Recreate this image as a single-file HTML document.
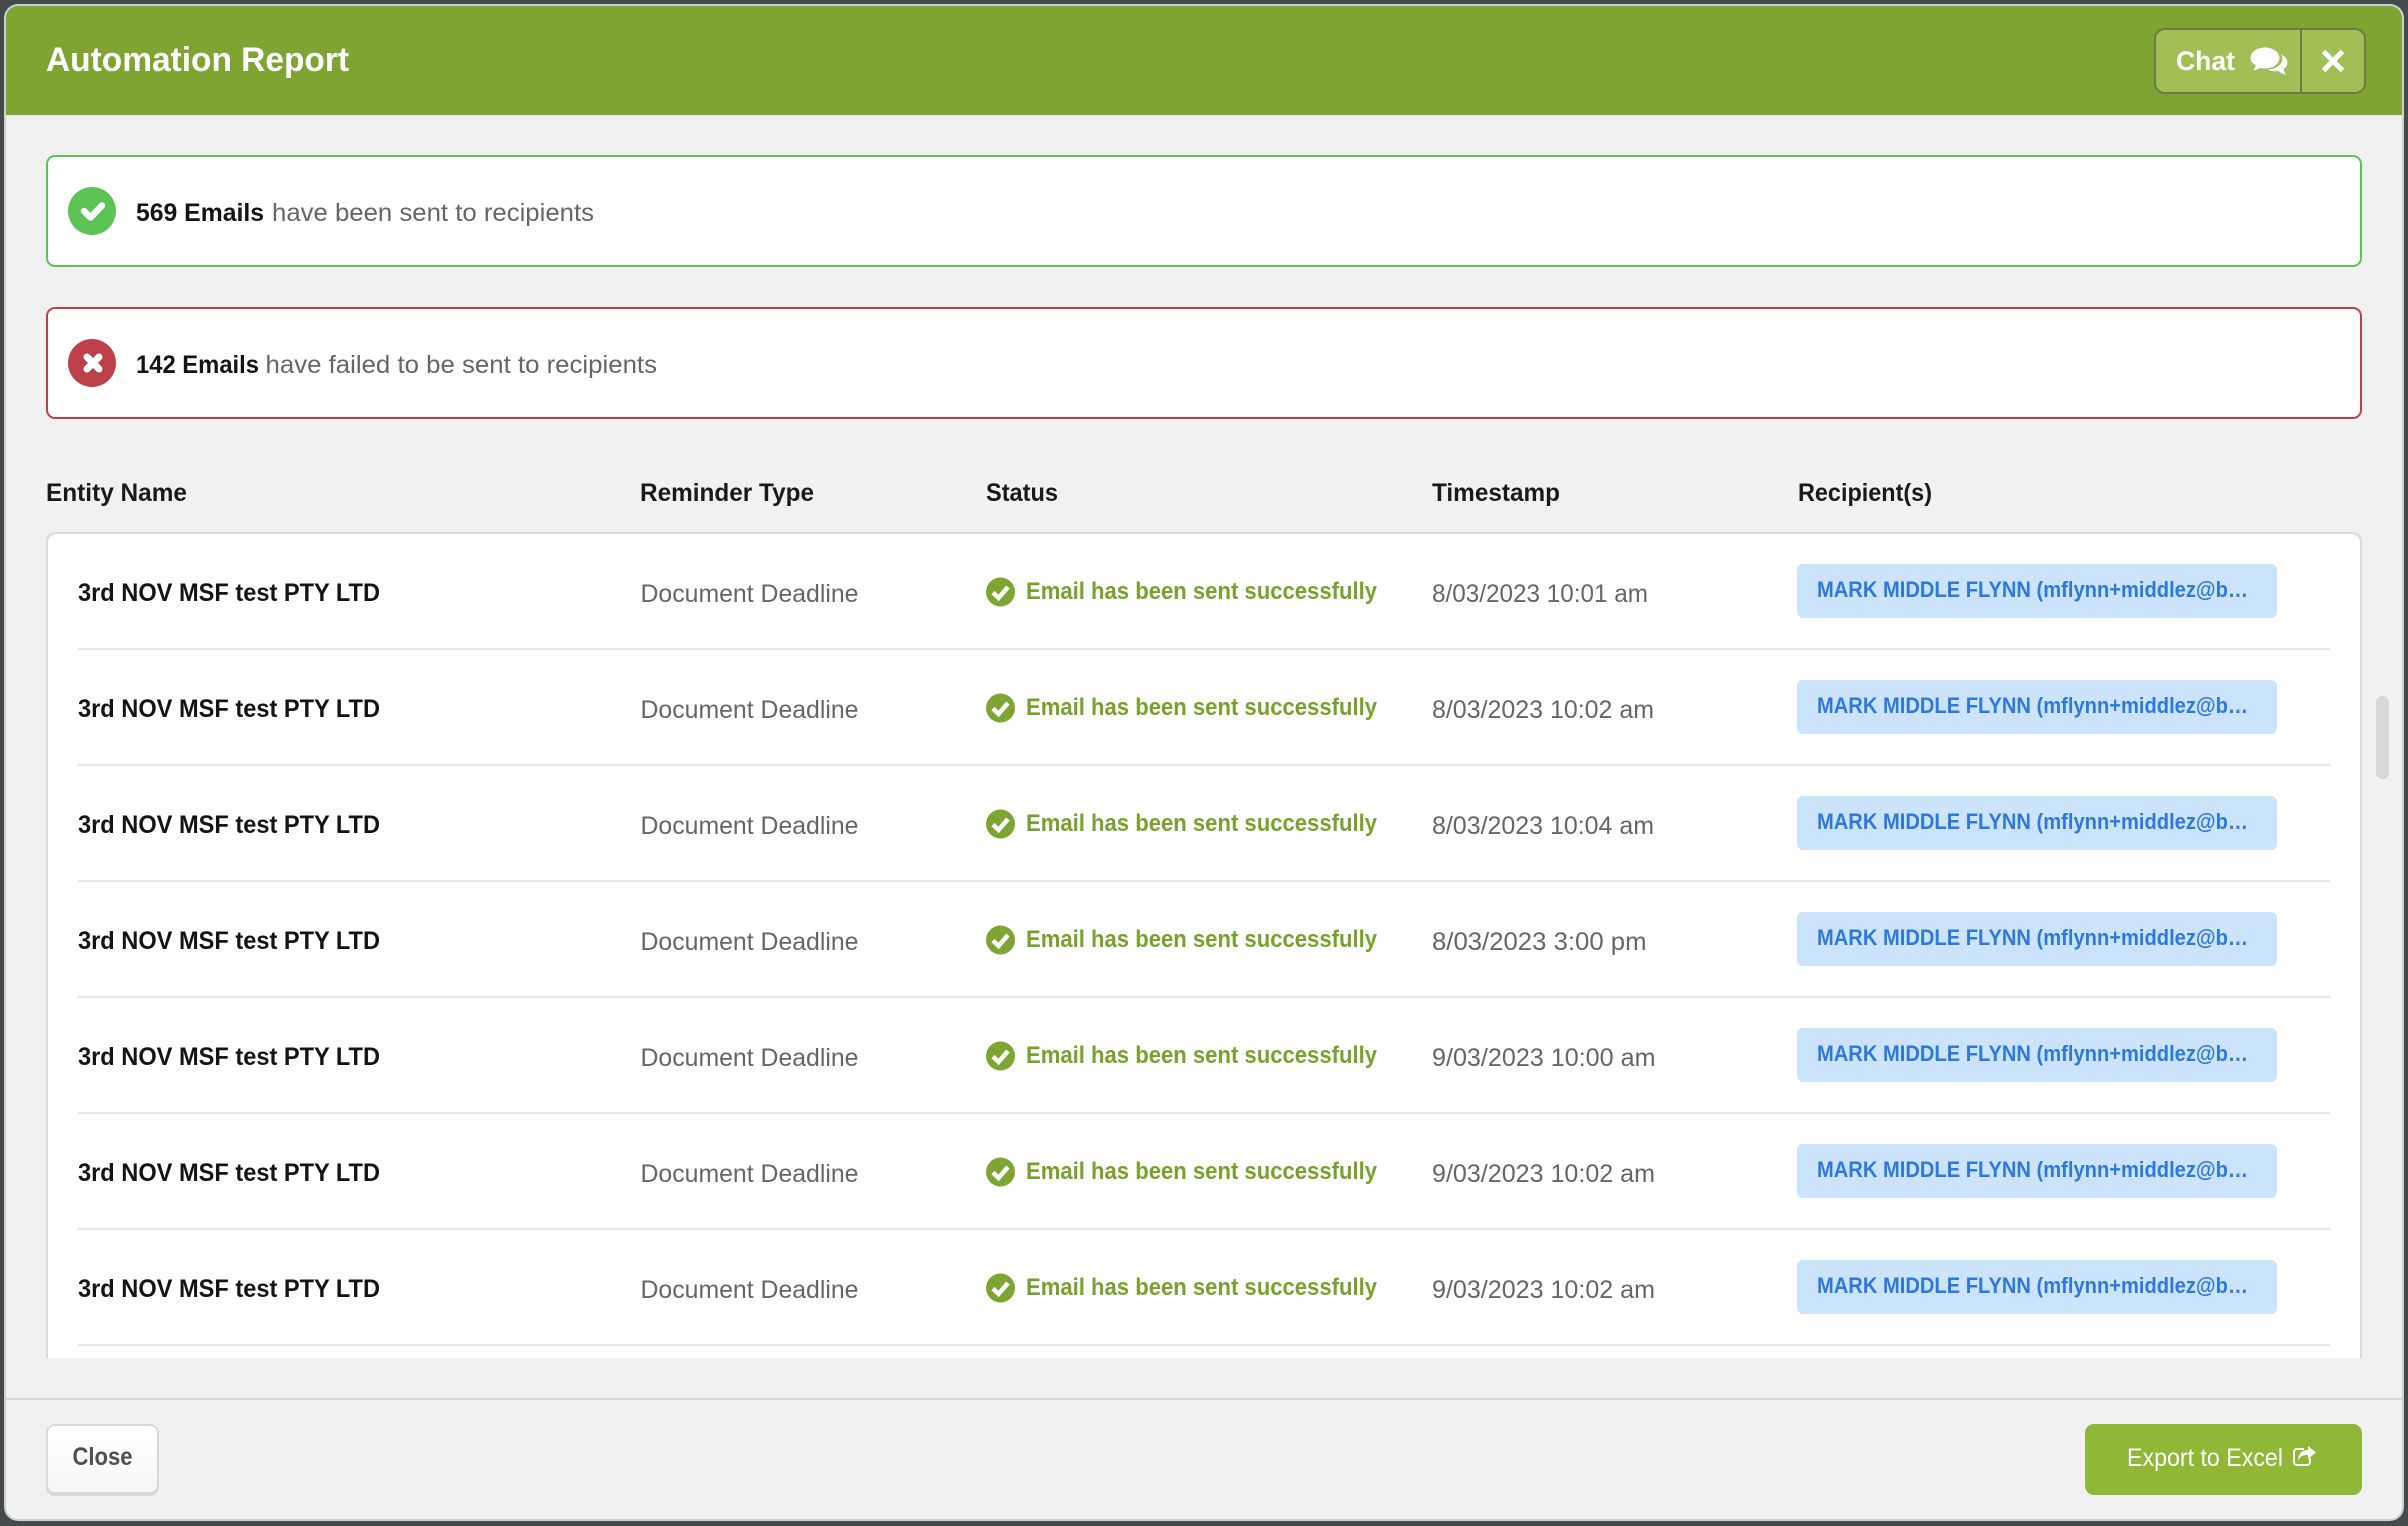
<!DOCTYPE html>
<html lang="en">
<head>
<meta charset="utf-8">
<title>Automation Report</title>
<style>
html,body{margin:0;padding:0;width:2408px;height:1526px;overflow:hidden;background:#454b4c}
svg{display:block;position:absolute;left:0;top:0}
text{font-family:"Liberation Sans",Arial,sans-serif}
.title{font-size:34px;font-weight:700;fill:#fff}
.dark{font-size:25px;font-weight:700;fill:#141414}
.grey{font-size:25px;fill:#666}
.head{font-size:25px;font-weight:700;fill:#1a1a1a}
.ok{font-size:24px;font-weight:700;fill:#78a22c}
.chip{font-size:22px;font-weight:700;fill:#2f78dc}
.cell{fill:#666;font-size:25px}
.nm{font-size:25px;font-weight:700;fill:#141414}
</style>
</head>
<body>
<svg width="2408" height="1526" viewBox="0 0 2408 1526" xmlns="http://www.w3.org/2000/svg">
<defs>
<linearGradient id="cg" x1="0" y1="0" x2="0" y2="1"><stop offset="0" stop-color="#fff"/><stop offset="1" stop-color="#f6f6f6"/></linearGradient>
</defs>
<!-- modal -->
<rect x="4" y="4" width="2400" height="1517" rx="14" fill="#cfcfcf"/>
<rect x="6" y="6" width="2396" height="1513" rx="12" fill="#f1f1f1"/>
<path d="M6 115V18a12 12 0 0 1 12-12H2390a12 12 0 0 1 12 12V115z" fill="#80a431"/>
<text class="title" x="46" y="71" textLength="303" lengthAdjust="spacingAndGlyphs">Automation Report</text>
<!-- header buttons -->
<rect x="2155" y="29" width="210" height="64" rx="10" fill="#a0c056" stroke="#6f7b43" stroke-width="2"/>
<rect x="2300" y="29" width="2" height="64" fill="#6f7b43"/>
<text x="2176" y="70" font-size="27" font-weight="700" fill="#fff" textLength="59" lengthAdjust="spacingAndGlyphs">Chat</text>
<path fill="#fff" d="M2265 47.500c8 0 14.500 4.700 14.500 10.500s-6.500 10.500-14.500 10.500c-2 0-3.500-.2-5-.6-2 1.600-4.500 2.300-7 2.400 1.500-1.500 2.500-3.300 2.800-5-3.500-1.900-5.300-4.500-5.300-7.300 0-5.800 6.500-10.500 14.500-10.500z"/>
<path fill="#fff" d="M2281 54.500c4 1.500 6.500 4.600 6.500 8 0 2.600-1.500 5-4 6.600.3 1.700 1.200 3.500 2.500 5.500-3-.5-5.500-1.800-7.500-3.600-1 .2-2.200.3-3.300.3-3 0-5.700-.7-8-2 9 .5 14.500-5 15-9 .2-2.500-.2-4.500-1.200-6.800z"/>
<path d="M2323.500 51.500l19 19M2342.500 51.500l-19 19" stroke="#fff" stroke-width="5" fill="none"/>
<!-- alerts -->
<rect x="47" y="156" width="2314" height="110" rx="8" fill="#fff" stroke="#5bc454" stroke-width="2"/>
<circle cx="92" cy="211" r="24" fill="#5bc454"/>
<path d="M84 211l6.500 6.500L102 205.500" stroke="#fff" stroke-width="6.500" fill="none" stroke-linecap="round" stroke-linejoin="round"/>
<text class="dark" x="136" y="221" textLength="128" lengthAdjust="spacingAndGlyphs">569 Emails</text>
<text class="grey" x="272" y="221" textLength="322" lengthAdjust="spacingAndGlyphs">have been sent to recipients</text>
<rect x="47" y="308" width="2314" height="110" rx="8" fill="#fff" stroke="#bd3f48" stroke-width="2"/>
<circle cx="92" cy="363" r="24" fill="#bd3f48"/>
<path d="M87 357l12 12M99 357l-12 12" stroke="#fff" stroke-width="7" fill="none" stroke-linecap="round"/>
<text class="dark" x="136" y="373" textLength="123" lengthAdjust="spacingAndGlyphs">142 Emails</text>
<text class="grey" x="265.500" y="373" textLength="391.500" lengthAdjust="spacingAndGlyphs">have failed to be sent to recipients</text>
<!-- table head -->
<text class="head" x="46" y="501" textLength="141" lengthAdjust="spacingAndGlyphs">Entity Name</text>
<text class="head" x="640" y="501" textLength="174" lengthAdjust="spacingAndGlyphs">Reminder Type</text>
<text class="head" x="986" y="501" textLength="72" lengthAdjust="spacingAndGlyphs">Status</text>
<text class="head" x="1432" y="501" textLength="128" lengthAdjust="spacingAndGlyphs">Timestamp</text>
<text class="head" x="1798" y="501" textLength="134" lengthAdjust="spacingAndGlyphs">Recipient(s)</text>
<!-- list panel -->
<rect x="46" y="532" width="2316" height="826" rx="9" fill="#dcdcdc"/>
<rect x="46" y="1346" width="2316" height="12" fill="#dcdcdc"/>
<path d="M48 1358V542a8 8 0 0 1 8-8H2352a8 8 0 0 1 8 8V1358z" fill="#fff"/>
<g fill="#e8e8e8">
<rect x="78" y="648" width="2252" height="2"/><rect x="78" y="764" width="2252" height="2"/><rect x="78" y="880" width="2252" height="2"/><rect x="78" y="996" width="2252" height="2"/><rect x="78" y="1112" width="2252" height="2"/><rect x="78" y="1228" width="2252" height="2"/><rect x="78" y="1344" width="2252" height="2"/>
</g>
<!-- row 1 -->
<text class="nm" x="78" y="601" textLength="302" lengthAdjust="spacingAndGlyphs">3rd NOV MSF test PTY LTD</text>
<text class="cell" x="640.500" y="602" textLength="218" lengthAdjust="spacingAndGlyphs">Document Deadline</text>
<circle cx="1000.500" cy="592" r="14.500" fill="#7ea532"/><path d="M993 592.500l5.500 5.500 9.500-11" stroke="#fff" stroke-width="4.500" fill="none"/>
<text class="ok" x="1026" y="599" textLength="351" lengthAdjust="spacingAndGlyphs">Email has been sent successfully</text>
<text class="cell" x="1432" y="602" textLength="216" lengthAdjust="spacingAndGlyphs">8/03/2023 10:01 am</text>
<rect x="1797" y="564" width="480" height="54" rx="6" fill="#cbe4fb"/>
<text class="chip" x="1817" y="597" textLength="431" lengthAdjust="spacingAndGlyphs">MARK MIDDLE FLYNN (mflynn+middlez@b…</text>
<!-- row 2 -->
<text class="nm" x="78" y="717" textLength="302" lengthAdjust="spacingAndGlyphs">3rd NOV MSF test PTY LTD</text>
<text class="cell" x="640.500" y="718" textLength="218" lengthAdjust="spacingAndGlyphs">Document Deadline</text>
<circle cx="1000.500" cy="708" r="14.500" fill="#7ea532"/><path d="M993 708.500l5.500 5.500 9.500-11" stroke="#fff" stroke-width="4.500" fill="none"/>
<text class="ok" x="1026" y="715" textLength="351" lengthAdjust="spacingAndGlyphs">Email has been sent successfully</text>
<text class="cell" x="1432" y="718" textLength="222" lengthAdjust="spacingAndGlyphs">8/03/2023 10:02 am</text>
<rect x="1797" y="680" width="480" height="54" rx="6" fill="#cbe4fb"/>
<text class="chip" x="1817" y="713" textLength="431" lengthAdjust="spacingAndGlyphs">MARK MIDDLE FLYNN (mflynn+middlez@b…</text>
<!-- row 3 -->
<text class="nm" x="78" y="833" textLength="302" lengthAdjust="spacingAndGlyphs">3rd NOV MSF test PTY LTD</text>
<text class="cell" x="640.500" y="834" textLength="218" lengthAdjust="spacingAndGlyphs">Document Deadline</text>
<circle cx="1000.500" cy="824" r="14.500" fill="#7ea532"/><path d="M993 824.500l5.500 5.500 9.500-11" stroke="#fff" stroke-width="4.500" fill="none"/>
<text class="ok" x="1026" y="831" textLength="351" lengthAdjust="spacingAndGlyphs">Email has been sent successfully</text>
<text class="cell" x="1432" y="834" textLength="222" lengthAdjust="spacingAndGlyphs">8/03/2023 10:04 am</text>
<rect x="1797" y="796" width="480" height="54" rx="6" fill="#cbe4fb"/>
<text class="chip" x="1817" y="829" textLength="431" lengthAdjust="spacingAndGlyphs">MARK MIDDLE FLYNN (mflynn+middlez@b…</text>
<!-- row 4 -->
<text class="nm" x="78" y="949" textLength="302" lengthAdjust="spacingAndGlyphs">3rd NOV MSF test PTY LTD</text>
<text class="cell" x="640.500" y="950" textLength="218" lengthAdjust="spacingAndGlyphs">Document Deadline</text>
<circle cx="1000.500" cy="940" r="14.500" fill="#7ea532"/><path d="M993 940.500l5.500 5.500 9.500-11" stroke="#fff" stroke-width="4.500" fill="none"/>
<text class="ok" x="1026" y="947" textLength="351" lengthAdjust="spacingAndGlyphs">Email has been sent successfully</text>
<text class="cell" x="1432" y="950" textLength="214.500" lengthAdjust="spacingAndGlyphs">8/03/2023 3:00 pm</text>
<rect x="1797" y="912" width="480" height="54" rx="6" fill="#cbe4fb"/>
<text class="chip" x="1817" y="945" textLength="431" lengthAdjust="spacingAndGlyphs">MARK MIDDLE FLYNN (mflynn+middlez@b…</text>
<!-- row 5 -->
<text class="nm" x="78" y="1065" textLength="302" lengthAdjust="spacingAndGlyphs">3rd NOV MSF test PTY LTD</text>
<text class="cell" x="640.500" y="1066" textLength="218" lengthAdjust="spacingAndGlyphs">Document Deadline</text>
<circle cx="1000.500" cy="1056" r="14.500" fill="#7ea532"/><path d="M993 1056.500l5.500 5.500 9.500-11" stroke="#fff" stroke-width="4.500" fill="none"/>
<text class="ok" x="1026" y="1063" textLength="351" lengthAdjust="spacingAndGlyphs">Email has been sent successfully</text>
<text class="cell" x="1432" y="1066" textLength="223.500" lengthAdjust="spacingAndGlyphs">9/03/2023 10:00 am</text>
<rect x="1797" y="1028" width="480" height="54" rx="6" fill="#cbe4fb"/>
<text class="chip" x="1817" y="1061" textLength="431" lengthAdjust="spacingAndGlyphs">MARK MIDDLE FLYNN (mflynn+middlez@b…</text>
<!-- row 6 -->
<text class="nm" x="78" y="1181" textLength="302" lengthAdjust="spacingAndGlyphs">3rd NOV MSF test PTY LTD</text>
<text class="cell" x="640.500" y="1182" textLength="218" lengthAdjust="spacingAndGlyphs">Document Deadline</text>
<circle cx="1000.500" cy="1172" r="14.500" fill="#7ea532"/><path d="M993 1172.500l5.500 5.500 9.500-11" stroke="#fff" stroke-width="4.500" fill="none"/>
<text class="ok" x="1026" y="1179" textLength="351" lengthAdjust="spacingAndGlyphs">Email has been sent successfully</text>
<text class="cell" x="1432" y="1182" textLength="223" lengthAdjust="spacingAndGlyphs">9/03/2023 10:02 am</text>
<rect x="1797" y="1144" width="480" height="54" rx="6" fill="#cbe4fb"/>
<text class="chip" x="1817" y="1177" textLength="431" lengthAdjust="spacingAndGlyphs">MARK MIDDLE FLYNN (mflynn+middlez@b…</text>
<!-- row 7 -->
<text class="nm" x="78" y="1297" textLength="302" lengthAdjust="spacingAndGlyphs">3rd NOV MSF test PTY LTD</text>
<text class="cell" x="640.500" y="1298" textLength="218" lengthAdjust="spacingAndGlyphs">Document Deadline</text>
<circle cx="1000.500" cy="1288" r="14.500" fill="#7ea532"/><path d="M993 1288.500l5.500 5.500 9.500-11" stroke="#fff" stroke-width="4.500" fill="none"/>
<text class="ok" x="1026" y="1295" textLength="351" lengthAdjust="spacingAndGlyphs">Email has been sent successfully</text>
<text class="cell" x="1432" y="1298" textLength="223" lengthAdjust="spacingAndGlyphs">9/03/2023 10:02 am</text>
<rect x="1797" y="1260" width="480" height="54" rx="6" fill="#cbe4fb"/>
<text class="chip" x="1817" y="1293" textLength="431" lengthAdjust="spacingAndGlyphs">MARK MIDDLE FLYNN (mflynn+middlez@b…</text>
<!-- scrollbar -->
<rect x="2376" y="696" width="13" height="83" rx="6.500" fill="#d8d8d8"/>
<!-- footer -->
<rect x="6" y="1398" width="2396" height="2" fill="#d6d6d6"/>
<rect x="46" y="1424" width="113" height="72" rx="9" fill="#d9d9d9"/>
<rect x="48" y="1426" width="109" height="66" rx="7" fill="url(#cg)"/>
<text x="72.500" y="1465" font-size="25" font-weight="700" fill="#505050" textLength="60" lengthAdjust="spacingAndGlyphs">Close</text>
<rect x="2085" y="1424" width="277" height="71" rx="9" fill="#90b836"/>
<text x="2127" y="1466" font-size="25" fill="#fff" textLength="156" lengthAdjust="spacingAndGlyphs">Export to Excel</text>
<path d="M2304 1449h-7a3 3 0 0 0-3 3v10a3 3 0 0 0 3 3h10a3 3 0 0 0 3-3v-4" fill="none" stroke="#fff" stroke-width="2"/>
<path fill="#fff" d="M2308 1446l8 6.500-8 6.500v-4c-5 0-8 1-10 6 0-7 4-11 10-11z"/>
</svg>
</body>
</html>
